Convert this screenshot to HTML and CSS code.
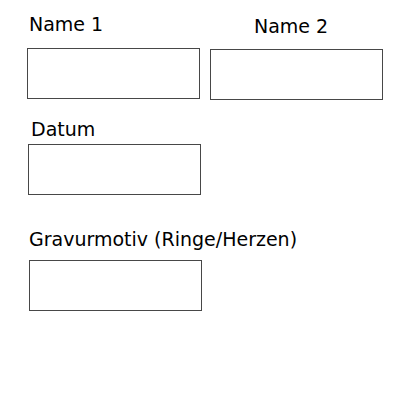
FILE: index.html
```html
<!DOCTYPE html>
<html lang="de">
<head>
<meta charset="utf-8">
<title>Gravur</title>
<link rel="stylesheet" href="styles.css">
</head>
<body>
<form class="form">
  <div class="row">
    <div class="field field-name1">
      <label class="label" for="n1">Name 1</label>
      <input class="box" id="n1" type="text">
    </div>
    <div class="field field-name2">
      <label class="label" for="n2">Name 2</label>
      <input class="box" id="n2" type="text">
    </div>
  </div>
  <div class="field field-datum">
    <label class="label" for="d">Datum</label>
    <input class="box" id="d" type="text">
  </div>
  <div class="field field-motiv">
    <label class="label" for="m">Gravurmotiv (Ringe/Herzen)</label>
    <input class="box" id="m" type="text">
  </div>
</form>
</body>
</html>
```

FILE: styles.css
```css
html, body {
  margin: 0;
  padding: 0;
  background: #ffffff;
}

.form {
  font-family: "DejaVu Sans", Verdana, sans-serif;
  font-size: 19px;
  color: #000000;
  padding-top: 13px;
}

.row {
  display: flex;
  align-items: flex-start;
}

.field {
  display: flex;
  flex-direction: column;
  align-items: flex-start;
}

.label {
  display: block;
  line-height: 22px;
  white-space: nowrap;
}

.box {
  display: block;
  box-sizing: border-box;
  width: 173px;
  height: 51px;
  margin: 0;
  padding: 0;
  border: 1px solid #474747;
  background: #ffffff;
  font: inherit;
  outline: none;
}

.field-name1 {
  margin-left: 27px;
}
.field-name1 .label {
  padding-left: 2px;
  margin-bottom: 13px;
}

.field-name2 {
  margin-left: 10px;
  margin-top: 2px;
}
.field-name2 .label {
  padding-left: 44px;
  margin-bottom: 12px;
}

.field-datum {
  margin-left: 28px;
  margin-top: 18px;
}
.field-datum .label {
  padding-left: 3px;
  margin-bottom: 4px;
}

.field-motiv {
  margin-left: 29px;
  margin-top: 33px;
}
.field-motiv .label {
  padding-left: 0;
  margin-bottom: 10px;
}
```
